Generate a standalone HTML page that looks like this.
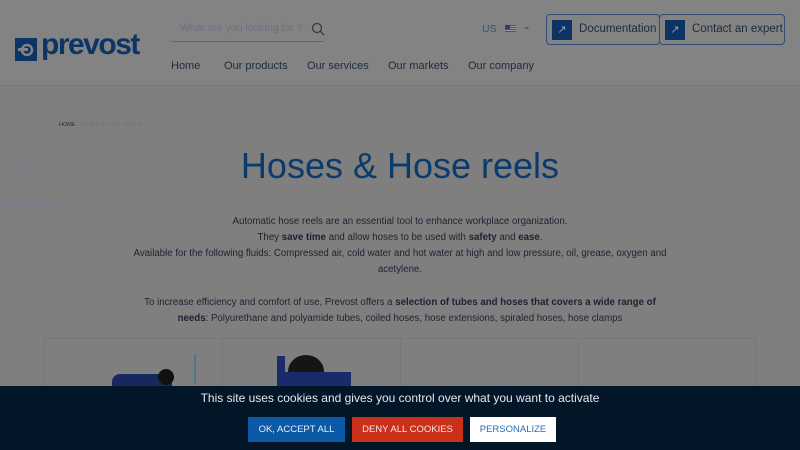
<!DOCTYPE html>
<html style="background:#7f7f7f"><head><meta charset="utf-8"><style>
*{margin:0;padding:0;box-sizing:border-box}
html,body{width:800px;height:450px;overflow:hidden;background:#7f7f7f}
body{font-family:"Liberation Sans",sans-serif;position:relative;color:#1b2230}
.page{position:absolute;left:0;top:0;width:800px;height:450px;background:#7f7f7f}
.hdr{position:absolute;left:0;top:0;width:800px;height:86px;background:#838383;border-bottom:1px solid #7a7a7a}
.abs{position:absolute;white-space:nowrap}
.nav span{position:absolute;top:60px;font-size:11px;color:#1e2a3c;white-space:nowrap}
.btn{position:absolute;top:14px;height:31px;border:1px solid #2d4d74;border-radius:4px;font-size:11.5px;color:#1e2a3c;white-space:nowrap}
.btn i{position:absolute;left:5px;top:5px;width:20px;height:20px;background:#0b3464;color:#8aa0bd;font-style:normal;font-size:11px;text-align:center;line-height:20px}
.btn b{position:absolute;left:32px;top:8px;font-weight:normal}
.p{position:absolute;left:0;width:800px;text-align:center;font-size:9.7px;color:#1b2230;white-space:nowrap}
.p b{font-weight:bold}
.ln{position:absolute;background:#75808e}
.cook{position:absolute;left:0;top:386px;width:800px;height:64px;background:#021627}
.cb{position:absolute;top:31px;height:25px;font-size:9.5px;text-align:center;line-height:25px}
</style></head><body>
<div class="page">
<div class="hdr">
 <svg class="abs" style="left:15px;top:38px" width="22" height="23"><rect width="22" height="23" fill="#0c3464"/><circle cx="12" cy="12" r="5" fill="none" stroke="#838383" stroke-width="2.5"/><rect x="3" y="10" width="10" height="3" fill="#838383"/></svg>
 <div class="abs" style="left:41px;top:28px;font-size:30px;font-weight:bold;color:#0c3464;letter-spacing:-1.5px">prevost</div>
 <div class="abs" style="left:180px;top:22px;font-size:10.5px;color:#6a7180">What are you looking for ?</div>
 <svg class="abs" style="left:311px;top:22px" width="14" height="14"><circle cx="6" cy="6" r="4.5" fill="none" stroke="#2a3545" stroke-width="1.2"/><line x1="9.5" y1="9.5" x2="13" y2="13" stroke="#2a3545" stroke-width="1.2"/></svg>
 <div class="abs" style="left:171px;top:41px;width:153px;height:1px;background:#5e6878"></div>
 <div class="nav"><span style="left:171px">Home</span><span style="left:224px">Our products</span><span style="left:307px">Our services</span><span style="left:388px">Our markets</span><span style="left:468px">Our company</span></div>
 <div class="abs" style="left:482px;top:23px;font-size:10.5px;color:#3d5272">US</div>
 <div class="abs" style="left:505px;top:25px;width:11px;height:7px;background:repeating-linear-gradient(#8a3d48 0 1px,#9a9a9a 1px 2px)"><div style="width:5px;height:4px;background:#2f3f6a"></div></div>
 <div class="abs" style="left:523px;top:21px;font-size:9px;color:#1d3a66">⌄</div>
 <div class="btn" style="left:546px;width:114px"><i>↗</i><b>Documentation</b></div>
 <div class="btn" style="left:659px;width:126px"><i>↗</i><b>Contact an expert</b></div>
</div>
<div class="abs" style="left:59px;top:122px;font-size:5.5px;color:#1e2a3c">HOME <span style="color:#6a7384">| HOSES &amp; HOSE REELS</span></div>
<div class="ln" style="left:0;top:204px;width:62px;height:1px"></div>
<div class="ln" style="left:20px;top:150px;width:1px;height:30px"></div>
<div class="ln" style="left:27px;top:180px;width:1px;height:128px"></div>
<div class="ln" style="left:640px;top:145px;width:76px;height:1px"></div>
<div class="ln" style="left:736px;top:145px;width:44px;height:1px"></div>
<div class="ln" style="left:753px;top:118px;width:1px;height:132px"></div>
<div class="abs" style="left:0;top:145px;width:800px;text-align:center;font-size:36px;color:#0b3a6c">Hoses &amp; Hose reels</div>
<div class="p" style="top:216px">Automatic hose reels are an essential tool to enhance workplace organization.</div>
<div class="p" style="top:232px">They <b>save time</b> and allow hoses to be used with <b>safety</b> and <b>ease</b>.</div>
<div class="p" style="top:248px">Available for the following fluids: Compressed air, cold water and hot water at high and low pressure, oil, grease, oxygen and</div>
<div class="p" style="top:264px">acetylene.</div>
<div class="p" style="top:297px">To increase efficiency and comfort of use, Prevost offers a <b>selection of tubes and hoses that covers a wide range of</b></div>
<div class="p" style="top:313px"><b>needs</b>: Polyurethane and polyamide tubes, coiled hoses, hose extensions, spiraled hoses, hose clamps</div>
<div class="abs" style="left:44px;top:338px;width:712px;height:60px;border:1px solid #767676"></div>
<div class="ln" style="left:222px;top:338px;width:1px;height:50px;background:#767676"></div>
<div class="ln" style="left:400px;top:338px;width:1px;height:50px;background:#767676"></div>
<div class="ln" style="left:578px;top:338px;width:1px;height:50px;background:#767676"></div>
<div class="abs" style="left:112px;top:374px;width:60px;height:14px;background:#17285e;border-radius:8px 8px 0 0"></div>
<div class="abs" style="left:158px;top:369px;width:16px;height:16px;border-radius:50%;background:#111"></div>
<div class="abs" style="left:194px;top:354px;width:2px;height:30px;background:#4a7a8a"></div>
<div class="abs" style="left:277px;top:356px;width:8px;height:32px;background:#1a2a6a"></div>
<div class="abs" style="left:288px;top:355px;width:36px;height:33px;border-radius:50%;background:#151515"></div>
<div class="abs" style="left:285px;top:372px;width:66px;height:16px;background:#1a2a6a"></div>
<div class="cook">
 <div class="abs" style="left:0;top:5px;width:800px;text-align:center;font-size:12px;color:#e6e8ec">This site uses cookies and gives you control over what you want to activate</div>
 <div class="cb" style="left:248px;width:97px;background:#0b5aa8;color:#e8eef6">OK, ACCEPT ALL</div>
 <div class="cb" style="left:352px;width:111px;background:#c9311b;color:#f6e6e2">DENY ALL COOKIES</div>
 <div class="cb" style="left:470px;width:86px;background:#fff;color:#2a6cb0">PERSONALIZE</div>
</div>
</div>
</body></html>
